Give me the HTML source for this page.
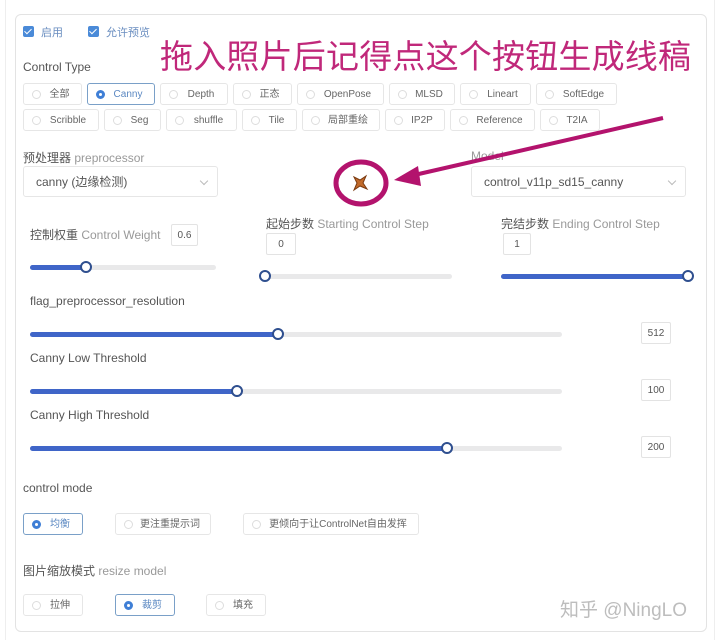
<!DOCTYPE html>
<html><head><meta charset="utf-8"><style>
*{box-sizing:border-box;margin:0;padding:0}
body{width:720px;height:640px;background:#fff;position:relative;overflow:hidden;font-family:"Liberation Sans","Noto Sans CJK SC",sans-serif;color:#555;font-size:11px}
.a{position:absolute}
.card{left:15px;top:14px;width:692px;height:618px;border:1px solid #e3e3e3;border-radius:6px}
.chip{position:absolute;height:22px;border:1px solid #e6e6e6;border-radius:3px;font-size:10px;color:#666;line-height:14px;padding-top:4px;text-align:center;padding-left:14px;white-space:nowrap}
.chip i{position:absolute;left:8px;top:6px;width:9px;height:9px;border:1px solid #ddd;border-radius:50%}
.chip.on{border-color:#7aa0c8;color:#5b88c2}
.chip.on i{border:3px solid #3f7fd6;background:#fff}
.lbl{font-size:12px;color:#555}
.lbl em{font-style:normal;color:#999}
.sel{border:1px solid #e6e6e6;border-radius:3px;height:31px;font-size:12px;color:#555;display:flex;align-items:center;padding-left:12px}
.sel:after{content:"";position:absolute;right:10px;top:11px;width:5px;height:5px;border-right:1px solid #bbb;border-bottom:1px solid #bbb;transform:rotate(45deg)}
.trk{position:absolute;height:5px;background:#e9e9ea;border-radius:3px}
.fill{position:absolute;left:0;top:0;height:5px;background:#3f65c8;border-radius:3px}
.th{position:absolute;width:12px;height:12px;border:2px solid #2f4f8f;border-radius:50%;background:#fff;top:-4px;margin-left:-6px}
.box{position:absolute;border:1px solid #e3e3e3;border-radius:2px;font-size:10px;color:#555;display:flex;align-items:center;justify-content:center}
.cb{position:absolute;width:11px;height:11px;background:#4a8ad8;border-radius:2px}
.cb:after{content:"";position:absolute;left:3px;top:1px;width:3px;height:6px;border-right:1.5px solid #fff;border-bottom:1.5px solid #fff;transform:rotate(45deg)}
</style></head><body>
<div class="a" style="left:5px;top:0;width:1px;height:640px;background:#eee"></div>
<div class="a" style="left:714px;top:0;width:1px;height:640px;background:#eee"></div>
<div class="a card"></div>

<div class="cb" style="left:23px;top:26px"></div><div class="a" style="left:41px;top:24px;font-size:11px;color:#6a8ec0">启用</div>
<div class="cb" style="left:88px;top:26px"></div><div class="a" style="left:106px;top:24px;font-size:11px;color:#6a8ec0">允许预览</div>

<div class="a" style="left:160px;top:33px;font-size:33px;color:#c0287a;font-family:'Noto Sans CJK SC',sans-serif;letter-spacing:0.2px;line-height:42px;white-space:nowrap">拖入照片后记得点这个按钮生成线稿</div>

<div class="a lbl" style="left:23px;top:60px">Control Type</div>

<div class="chip" style="left:23px;top:83px;width:59px"><i></i>全部</div>
<div class="chip on" style="left:87px;top:83px;width:68px"><i></i>Canny</div>
<div class="chip" style="left:160px;top:83px;width:68px"><i></i>Depth</div>
<div class="chip" style="left:233px;top:83px;width:59px"><i></i>正态</div>
<div class="chip" style="left:297px;top:83px;width:87px"><i></i>OpenPose</div>
<div class="chip" style="left:389px;top:83px;width:66px"><i></i>MLSD</div>
<div class="chip" style="left:460px;top:83px;width:71px"><i></i>Lineart</div>
<div class="chip" style="left:536px;top:83px;width:81px"><i></i>SoftEdge</div>

<div class="chip" style="left:23px;top:109px;width:76px"><i></i>Scribble</div>
<div class="chip" style="left:104px;top:109px;width:57px"><i></i>Seg</div>
<div class="chip" style="left:166px;top:109px;width:71px"><i></i>shuffle</div>
<div class="chip" style="left:242px;top:109px;width:55px"><i></i>Tile</div>
<div class="chip" style="left:302px;top:109px;width:78px"><i></i>局部重绘</div>
<div class="chip" style="left:385px;top:109px;width:60px"><i></i>IP2P</div>
<div class="chip" style="left:450px;top:109px;width:85px"><i></i>Reference</div>
<div class="chip" style="left:540px;top:109px;width:60px"><i></i>T2IA</div>

<div class="a lbl" style="left:23px;top:149px">预处理器 <em>preprocessor</em></div>
<div class="a sel" style="left:23px;top:166px;width:195px">canny (边缘检测)</div>
<div class="a lbl" style="left:471px;top:149px"><em>Model</em></div>
<div class="a sel" style="left:471px;top:166px;width:215px">control_v11p_sd15_canny</div>

<svg class="a" style="left:0;top:0" width="720" height="640">
<ellipse cx="361" cy="183" rx="25" ry="21" fill="none" stroke="#b3136d" stroke-width="5"/>
<path d="M354 177 L360 180 L366 176 L363 183 L367 189 L360 186 L354 190 L357 183 Z" fill="#c26a2a" stroke="#7a3a10" stroke-width="1"/>
<line x1="663" y1="118" x2="410" y2="176" stroke="#b3136d" stroke-width="4"/>
<polygon points="394,180 418,166 421,186" fill="#b3136d"/>
</svg>

<div class="a lbl" style="left:30px;top:226px">控制权重 <em>Control Weight</em></div>
<div class="box" style="left:171px;top:224px;width:27px;height:22px">0.6</div>
<div class="trk" style="left:30px;top:265px;width:186px"><div class="fill" style="width:56px"></div><div class="th" style="left:56px"></div></div>

<div class="a lbl" style="left:266px;top:215px">起始步数 <em>Starting Control Step</em></div>
<div class="box" style="left:266px;top:233px;width:30px;height:22px">0</div>
<div class="trk" style="left:265px;top:274px;width:187px"><div class="th" style="left:0"></div></div>

<div class="a lbl" style="left:501px;top:215px">完结步数 <em>Ending Control Step</em></div>
<div class="box" style="left:503px;top:233px;width:28px;height:22px">1</div>
<div class="trk" style="left:501px;top:274px;width:187px"><div class="fill" style="width:187px"></div><div class="th" style="left:187px"></div></div>

<div class="a lbl" style="left:30px;top:294px">flag_preprocessor_resolution</div>
<div class="trk" style="left:30px;top:332px;width:532px"><div class="fill" style="width:248px"></div><div class="th" style="left:248px"></div></div>
<div class="box" style="left:641px;top:322px;width:30px;height:22px">512</div>

<div class="a lbl" style="left:30px;top:351px">Canny Low Threshold</div>
<div class="trk" style="left:30px;top:389px;width:532px"><div class="fill" style="width:207px"></div><div class="th" style="left:207px"></div></div>
<div class="box" style="left:641px;top:379px;width:30px;height:22px">100</div>

<div class="a lbl" style="left:30px;top:408px">Canny High Threshold</div>
<div class="trk" style="left:30px;top:446px;width:532px"><div class="fill" style="width:417px"></div><div class="th" style="left:417px"></div></div>
<div class="box" style="left:641px;top:436px;width:30px;height:22px">200</div>

<div class="a lbl" style="left:23px;top:481px">control mode</div>
<div class="chip on" style="left:23px;top:513px;width:60px"><i></i>均衡</div>
<div class="chip" style="left:115px;top:513px;width:96px"><i></i>更注重提示词</div>
<div class="chip" style="left:243px;top:513px;width:176px"><i></i>更倾向于让ControlNet自由发挥</div>

<div class="a lbl" style="left:23px;top:562px">图片缩放模式 <em>resize model</em></div>
<div class="chip" style="left:23px;top:594px;width:60px"><i></i>拉伸</div>
<div class="chip on" style="left:115px;top:594px;width:60px"><i></i>裁剪</div>
<div class="chip" style="left:206px;top:594px;width:60px"><i></i>填充</div>

<div class="a" style="left:560px;top:595px;font-size:19px;color:#bdbdbd">知乎 @NingLO</div>
</body></html>
